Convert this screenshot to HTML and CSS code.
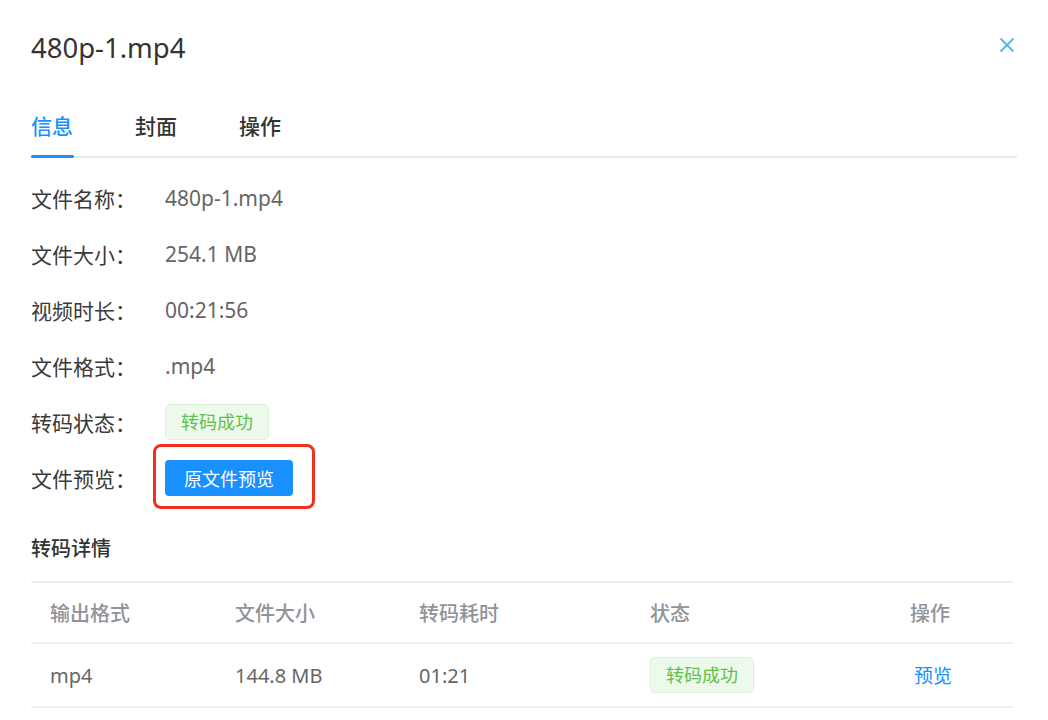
FILE: index.html
```html
<!DOCTYPE html>
<html lang="zh-CN">
  <head>
    <meta charset="UTF-8" />
    <meta name="viewport" content="width=device-width, initial-scale=1.0" />
    <title>480p-1.mp4</title>
    <link rel="stylesheet" href="styles.css">
  </head>
  <body>
    <div class="drawer">
      <header class="drawer-header">
        <span class="drawer-title">480p-1.mp4</span>
        <button class="close" aria-label="关闭">
          <svg width="16" height="16" viewBox="0 0 16 16">
            <path d="M1.5 1.5 L14.5 14.5 M14.5 1.5 L1.5 14.5" stroke="#55b4e4" stroke-width="1.8" fill="none" />
          </svg>
        </button>
      </header>

      <nav class="tabs">
        <span class="tab active">信息</span>
        <span class="tab">封面</span>
        <span class="tab">操作</span>
      </nav>

      <div class="info">
        <div class="row">
          <span class="label">文件名称：</span>
          <span class="value">480p-1.mp4</span>
        </div>
        <div class="row">
          <span class="label">文件大小：</span>
          <span class="value">254.1 MB</span>
        </div>
        <div class="row">
          <span class="label">视频时长：</span>
          <span class="value">00:21:56</span>
        </div>
        <div class="row">
          <span class="label">文件格式：</span>
          <span class="value">.mp4</span>
        </div>
        <div class="row">
          <span class="label">转码状态：</span>
          <span class="value"><span class="tag">转码成功</span></span>
        </div>
        <div class="row">
          <span class="label">文件预览：</span>
          <span class="value"><button class="btn-primary highlight">原文件预览</button></span>
        </div>
      </div>

      <h3 class="section-title">转码详情</h3>

      <div class="table">
        <div class="tr thead">
          <div class="td">输出格式</div>
          <div class="td">文件大小</div>
          <div class="td">转码耗时</div>
          <div class="td">状态</div>
          <div class="td">操作</div>
        </div>
        <div class="tr">
          <div class="td">mp4</div>
          <div class="td">144.8 MB</div>
          <div class="td">01:21</div>
          <div class="td"><span class="tag">转码成功</span></div>
          <div class="td"><a class="link" href="#">预览</a></div>
        </div>
      </div>
    </div>
  </body>
</html>
```

FILE: styles.css
```css
body {
  margin: 0;
  background-color: #fff;
  font-family: "Noto Sans", "Noto Sans CJK SC", sans-serif;
  color: #333;
}
.drawer {
  padding: 0 31px;
}

.drawer-header {
  display: flex;
  align-items: center;
  justify-content: space-between;
  height: 96px;
}
.drawer-title {
  font-size: 27.5px;
  color: #333;
  margin-top: -2px;
}
.close {
  border: 0;
  background: none;
  padding: 0;
  margin-right: 2px;
  margin-top: -4px;
  cursor: pointer;
}

.tabs {
  display: flex;
  border-bottom: 2px solid #e6e9f0;
}
.tab {
  position: relative;
  font-size: 21px;
  font-weight: 500;
  line-height: 60px;
  padding: 0 31px;
  color: #333;
}
.tab:first-child {
  padding-left: 0;
}
.tab.active {
  color: #1890ff;
}
.tab.active::after {
  content: "";
  position: absolute;
  left: 0;
  right: 30px;
  bottom: -2px;
  height: 3px;
  border-radius: 2px;
  background-color: #1890ff;
}

.info {
  margin-top: 12px;
}
.row {
  display: flex;
  align-items: center;
  height: 56px;
  font-size: 21px;
}
.label {
  width: 134px;
  flex-shrink: 0;
  color: #3a3a3a;
}
.value {
  color: #666;
}

.tag {
  display: inline-block;
  box-sizing: border-box;
  height: 36px;
  line-height: 34px;
  padding: 0 15px;
  font-size: 18px;
  color: #5fc04a;
  background-color: #edf9ea;
  border: 1px solid #d9f2d4;
  border-radius: 5px;
}
.btn-primary {
  height: 36px;
  padding: 0 19px;
  font-family: inherit;
  font-size: 18px;
  color: #fff;
  background-color: #1890ff;
  border: 0;
  border-radius: 4px;
}
.highlight {
  position: relative;
}
.highlight::after {
  content: "";
  position: absolute;
  top: -16px;
  left: -12px;
  right: -22px;
  bottom: -13px;
  border: 3px solid #f0301e;
  border-radius: 8px;
}

.section-title {
  margin: 28px 0 17px;
  font-size: 20px;
  font-weight: 500;
  line-height: 30px;
  color: #333;
}

.table {
  margin-right: 4px;
  border-top: 2px solid #ebeef5;
}
.tr {
  display: grid;
  grid-template-columns: 185px 184px 231px 260px 1fr;
  align-items: center;
  height: 62px;
  border-bottom: 2px solid #ebeef5;
  font-size: 20px;
  color: #666;
}
.thead {
  height: 59px;
  color: #909399;
  font-weight: 500;
}
.td {
  padding-left: 19px;
}
.link {
  margin-left: 4px;
  color: #1890ff;
  text-decoration: none;
  font-size: 19px;
}
```
